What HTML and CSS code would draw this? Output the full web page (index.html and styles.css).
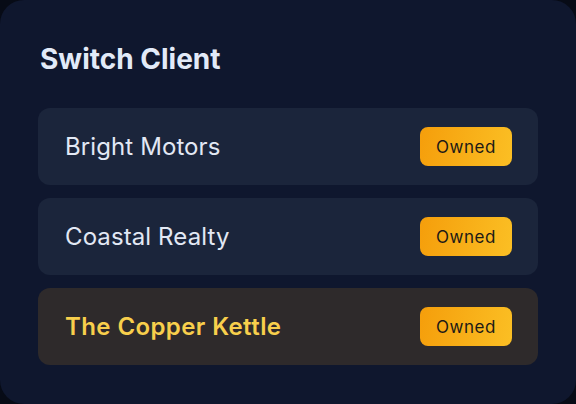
FILE: index.html
```html
<!DOCTYPE html>
<html lang="en">
<head>
<meta charset="utf-8">
<title>Switch Client</title>
<link rel="stylesheet" href="styles.css">
</head>
<body>
<div class="card">
  <h1 class="title">Switch Client</h1>
  <ul class="clients">
    <li class="client">
      <span class="client-name">Bright Motors</span>
      <span class="badge">Owned</span>
    </li>
    <li class="client">
      <span class="client-name">Coastal Realty</span>
      <span class="badge">Owned</span>
    </li>
    <li class="client client-active">
      <span class="client-name">The Copper Kettle</span>
      <span class="badge">Owned</span>
    </li>
  </ul>
</div>
</body>
</html>
```
FILE: styles.css
```css
* { box-sizing: border-box; }
html, body {
  margin: 0;
  padding: 0;
  background: #070b16;
}
body {
  width: 576px;
  height: 404px;
  font-family: Inter, "Noto Sans", sans-serif;
}
.card {
  width: 576px;
  height: 404px;
  background: #0f172e;
  border-radius: 24px;
  padding: 43px 38px 0;
}
.title {
  margin: 0 0 32px 2px;
  font-size: 28px;
  line-height: 33px;
  font-weight: 700;
  color: #e2eaf8;
}
.clients {
  list-style: none;
  margin: 0;
  padding: 0;
  display: flex;
  flex-direction: column;
  gap: 13px;
}
.client {
  height: 77px;
  display: flex;
  align-items: center;
  justify-content: space-between;
  padding: 0 26px 0 27px;
  background: #1b253b;
  border-radius: 12px;
}
.client-name {
  font-size: 24px;
  font-weight: 400;
  letter-spacing: 0.1px;
  color: #e2e8f4;
}
.client-active {
  background: #2e2a2b;
}
.client-active .client-name {
  color: #f8cf4c;
  font-weight: 600;
  letter-spacing: 0.4px;
}
.badge {
  width: 92px;
  height: 39px;
  display: flex;
  align-items: center;
  justify-content: center;
  border-radius: 8px;
  background: linear-gradient(100deg, #f59e0b, #fbbf24);
  color: #1c1a17;
  font-size: 17px;
  font-weight: 400;
  letter-spacing: 0.5px;
}
```
